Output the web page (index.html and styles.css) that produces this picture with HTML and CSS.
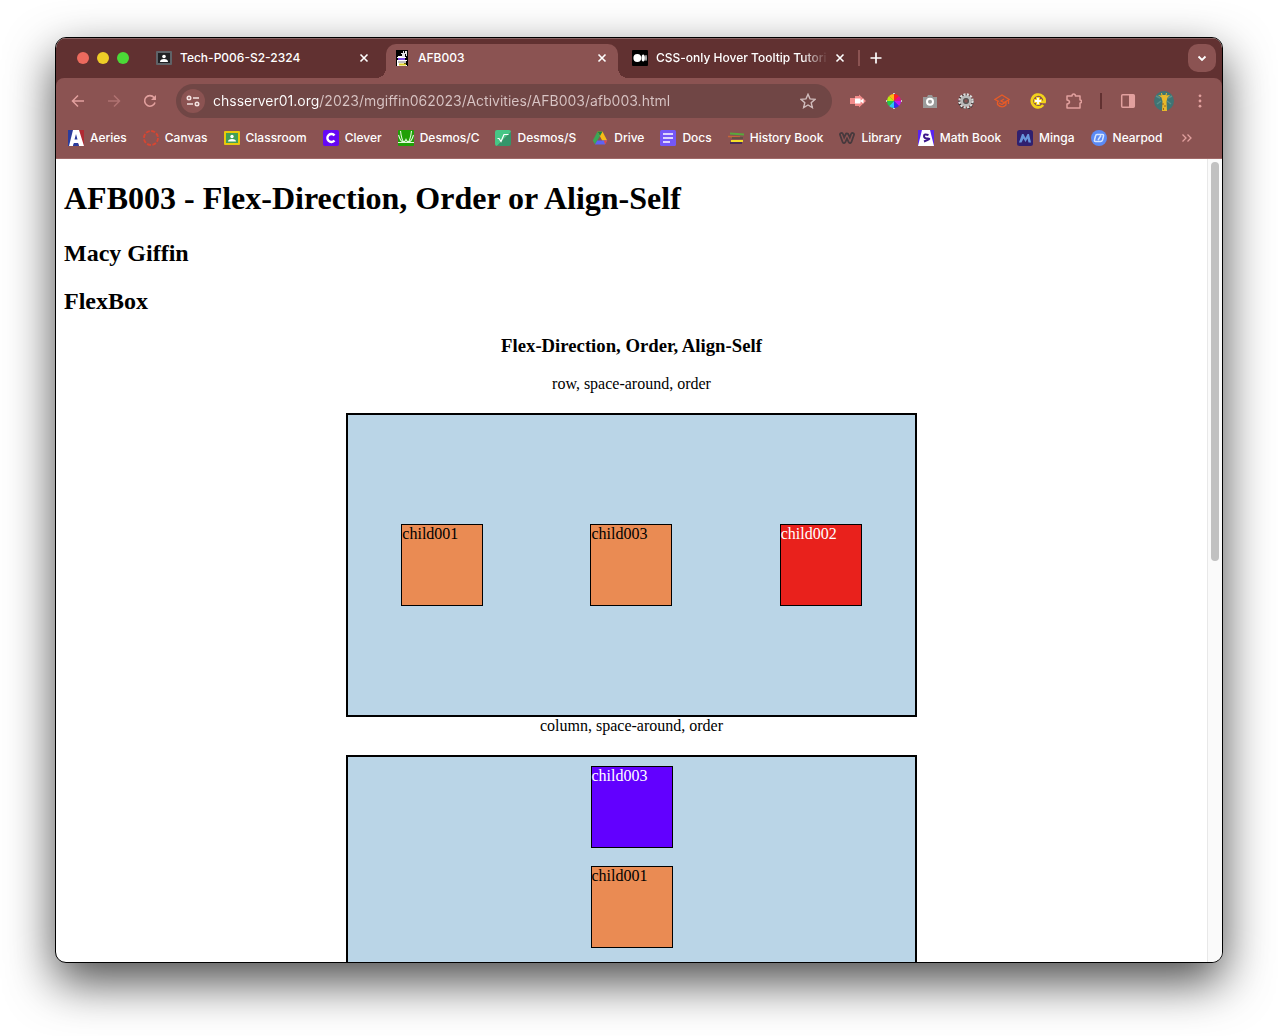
FILE: index.html
```html
<!DOCTYPE html>
<html lang="en">
<head>
<meta charset="utf-8">
<title>AFB003</title>
<link rel="stylesheet" href="styles.css">
</head>
<body>
<div class="window">
  <header class="chrome">
    <div class="tabstrip">
      <div class="lights"><span class="light red"></span><span class="light yellow"></span><span class="light green"></span></div>
      <div class="tabs">
        <div class="tab">
          <svg class="icon" viewBox="0 0 16 16"><rect y="1" width="16" height="14" rx="1" fill="#5f6368"/><rect x="2" y="3" width="12" height="10" fill="#202124"/><circle cx="8" cy="6.5" r="1.8" fill="#fff"/><path d="M4 12q0-3 4-3t4 3z" fill="#fff"/></svg>
          <span class="tab-title">Tech-P006-S2-2324</span>
          <button class="close" aria-label="Close tab"><svg viewBox="0 0 16 16"><path d="M4.5 4.500l7 7m0-7l-7 7" stroke="#fff" stroke-width="1.600"/></svg></button>
        </div>
        <div class="tab active">
          <svg class="icon" viewBox="0 0 16 16"><path d="M2 0h12v16H2z" fill="#000"/><path d="M9 1h1v2h1V1h2v5h-2v1H8V4H7V3h2z" fill="#e4e4e4"/><path d="M4 6h4v1h4v1H3V7h1zM3 10h10v1H3zM3 11h1v2h6v1H6v1h7v1H3z" fill="#fff"/><path d="M4 9h7" stroke="#7c4be0" stroke-width="2"/><path d="M4 12h8" stroke="#fff" stroke-width="1.500"/><path d="M5 14.500h7" stroke="#dcd02a" stroke-width="2"/><path d="M11 4h1v2h-1z" fill="#000"/></svg>
          <span class="tab-title">AFB003</span>
          <button class="close" aria-label="Close tab"><svg viewBox="0 0 16 16"><path d="M4.500 4.500l7 7m0-7l-7 7" stroke="#fff" stroke-width="1.600"/></svg></button>
        </div>
        <div class="tab">
          <svg class="icon" viewBox="0 0 16 16"><rect width="16" height="16" rx="1" fill="#000"/><circle cx="5.300" cy="8" r="3.900" fill="#fff"/><ellipse cx="11.200" cy="8" rx="1.700" ry="3.600" fill="#fff"/><ellipse cx="14" cy="8" rx=".7" ry="3.200" fill="#fff"/></svg>
          <span class="tab-title fade">CSS-only Hover Tooltip Tutori</span>
          <button class="close" aria-label="Close tab"><svg viewBox="0 0 16 16"><path d="M4.500 4.500l7 7m0-7l-7 7" stroke="#fff" stroke-width="1.600"/></svg></button>
        </div>
      </div>
      <span class="tab-divider"></span>
      <button class="new-tab" aria-label="New tab"><svg viewBox="0 0 16 16"><path d="M8 2.500v11M2.500 8h11" stroke="#fff" stroke-width="1.700"/></svg></button>
      <button class="tab-search" aria-label="Search tabs"><svg viewBox="0 0 16 16"><path d="M4.500 6.500L8 10l3.500-3.500" fill="none" stroke="#fff" stroke-width="1.800"/></svg></button>
    </div>
    <div class="toolbar">
      <button class="tool" aria-label="Back"><svg viewBox="0 0 16 16"><path d="M14 8H3M8 2.500L2.500 8 8 13.500" fill="none" stroke="#e2a09e" stroke-width="1.500"/></svg></button>
      <button class="tool" aria-label="Forward"><svg viewBox="0 0 16 16"><path d="M2 8h11M8 2.500L13.500 8 8 13.500" fill="none" stroke="#b07372" stroke-width="1.500"/></svg></button>
      <button class="tool" aria-label="Reload"><svg viewBox="0 0 16 16"><path d="M13 9.500A5.300 5.300 0 1 1 12 4.500L13.500 6" fill="none" stroke="#e2a09e" stroke-width="1.600"/><path d="M14 2v5H9z" fill="#e2a09e"/></svg></button>
      <div class="omnibox">
        <button class="site-info" aria-label="Site information"><svg viewBox="0 0 16 16" fill="none" stroke="#f4e2e1" stroke-width="1.600"><circle cx="4" cy="5" r="1.700"/><path d="M8 5h6M2 11h6"/><circle cx="12" cy="11" r="1.700"/></svg></button>
        <input class="address" type="text" aria-label="Address" value="chsserver01.org/2023/mgiffin062023/Activities/AFB003/afb003.html">
        <button class="star" aria-label="Bookmark this page"><svg viewBox="0 0 16 16"><path d="M8 1.300l2 4.600 5 .45-3.800 3.300 1.150 4.950L8 12l-4.350 2.600L4.800 9.650 1 6.350l5-.45z" fill="none" stroke="#d0bcbc" stroke-width="1.400"/></svg></button>
      </div>
      <div class="extensions">
        <button class="tool" aria-label="Screen recorder"><svg viewBox="0 0 16 16"><path d="M0 5h5V3h4V1.500L16 8l-7 6.500V13H5v-2H0z" fill="#f28b8a"/><path d="M5 5.500h5.500v5H5zM10 8l3.500-2.500v5z" fill="#fff"/></svg></button>
        <button class="tool" aria-label="Color picker"><svg viewBox="0 0 16 16"><path d="M8 8L8 1A7 7 0 0 1 13 3z" fill="#f22"/><path d="M8 8l5-5a7 7 0 0 1 2 5z" fill="#e0108c"/><path d="M8 8h7a7 7 0 0 1-2 5z" fill="#c21af0"/><path d="M8 8l5 5a7 7 0 0 1-5 2z" fill="#352bed"/><path d="M8 8v7a7 7 0 0 1-5-2z" fill="#29c9ef"/><path d="M8 8l-5 5a7 7 0 0 1-2-5z" fill="#22c94b"/><path d="M8 8H1a7 7 0 0 1 2-5z" fill="#b8ee11"/><path d="M8 8L3 3a7 7 0 0 1 5-2z" fill="#ffba15"/><path d="M7 .5h2M7 15.500h2M.5 7v2M15.500 7v2" stroke="#ccc"/></svg></button>
        <button class="tool" aria-label="Screenshot"><svg viewBox="0 0 16 16"><path d="M1 4h4l1-2h4l1 2h4v11H1z" fill="#9a9a9a"/><circle cx="8" cy="8.700" r="3" fill="#9a9a9a" stroke="#fff" stroke-width="2"/></svg></button>
        <button class="tool" aria-label="Settings extension"><svg viewBox="0 0 16 16"><circle cx="8" cy="8.700" r="6.600" fill="none" stroke="#2b2b2b" stroke-width="2.600" stroke-dasharray="2.200 1.250"/><circle cx="8" cy="8" r="6.500" fill="none" stroke="#ddd" stroke-width="2.400" stroke-dasharray="2.100 1.300"/><circle cx="8" cy="8" r="4.200" fill="none" stroke="#b9b9b9" stroke-width="3"/><circle cx="8" cy="8" r="3" fill="#555"/><circle cx="8" cy="8" r="1.700" fill="#8b5352"/></svg></button>
        <button class="tool" aria-label="Scholar"><svg viewBox="0 0 16 16" fill="none" stroke="#e85b26" stroke-width="1.300"><path d="M5 8.500L.8 6.500 8 2l7.200 4.500L10 9.500 7 8l3-2M14.500 7v4M3.500 8.500v3Q8 16 12 12V9L8 11.500 5 10"/></svg></button>
        <button class="tool" aria-label="Edpuzzle"><svg viewBox="0 0 16 16"><path d="M13.200 12A6.400 6.400 0 1 1 14.600 8.800H12" fill="none" stroke="#f2d21b" stroke-width="2.700"/><path d="M8 4v8M4 8h8" stroke="#f2d21b" stroke-width="4"/><path d="M8 4.800v6.400M4.800 8h6.400" stroke="#fff" stroke-width="1.800"/></svg></button>
        <button class="tool" aria-label="Extensions"><svg viewBox="0 0 16 16"><path d="M1 3h5q0-2 1.700-2T9.400 3H14v4q1.500 0 1.500 1.500T14 10v5H1v-4q2.500-.3 2.500-2T1 7z" fill="none" stroke="#e2a09e" stroke-width="1.500" stroke-linejoin="round"/></svg></button>
        <span class="tool-divider"></span>
        <button class="tool" aria-label="Side panel"><svg viewBox="0 0 16 16"><rect x="1.700" y="1.700" width="12.600" height="12.600" rx="1" fill="none" stroke="#e2a09e" stroke-width="1.500"/><path d="M9 2h5v12H9z" fill="#e2a09e"/></svg></button>
        <button class="tool" aria-label="Profile"><svg class="avatar" viewBox="0 0 20 20"><circle cx="10" cy="10" r="10" fill="#3f7474"/><path d="M2 5l4 2M18 5l-4 2M3 13l4-3M17 13l-4-3" stroke="#5b8f8a" stroke-width="1.500"/><path d="M7 2h1l.5 2h3L12 2h1l-.5 2.500L16 4l-2.500 2.500-1 4L13 20H8l.5-9.500-1-4L4 4l3.500.5z" fill="#e9b92b"/><path d="M9 12v2m2 0v2M9.500 17v2" stroke="#a4651d"/></svg></button>
        <button class="tool" aria-label="Menu"><svg viewBox="0 0 16 16" fill="#e2a09e"><circle cx="8" cy="2.800" r="1.400"/><circle cx="8" cy="8" r="1.400"/><circle cx="8" cy="13.200" r="1.400"/></svg></button>
      </div>
    </div>
    <nav class="bookmarks" aria-label="Bookmarks">
      <a href="#"><svg class="icon" viewBox="0 0 16 16"><path d="M0 0h8v16H0z" fill="#2b3c9c"/><path d="M8 0h8v16H8z" fill="#b02a33"/><path d="M5 0h6l5 16h-5l-1-3H6l-1 3H1z" fill="#fff"/><path d="M8 4l1.500 5.500h-3zM6 13h4l1 3H5z" fill="#2b3c9c"/></svg>Aeries</a>
      <a href="#"><svg class="icon" viewBox="0 0 16 16"><circle cx="8" cy="8" r="7" fill="none" stroke="#d64632" stroke-width="1.900" stroke-dasharray="4 1.500"/></svg>Canvas</a>
      <a href="#"><svg class="icon" viewBox="0 0 16 16"><rect y="1" width="16" height="14" rx="1" fill="#e8ca0b"/><rect x="2" y="3" width="12" height="10" fill="#419f57"/><circle cx="8" cy="6.500" r="1.700" fill="#fff"/><path d="M4 11.500q0-2.500 4-2.500t4 2.500z" fill="#fff"/></svg>Classroom</a>
      <a href="#"><svg class="icon" viewBox="0 0 16 16"><rect width="16" height="16" rx="2" fill="#6507f5"/><path d="M11.500 10.500A4 4 0 1 1 11.500 5.500" fill="none" stroke="#fff" stroke-width="2.400"/></svg>Clever</a>
      <a href="#"><svg class="icon" viewBox="0 0 16 16"><rect width="16" height="16" rx="1" fill="#1fa006"/><path d="M.5 5q2 7 5 7 1.500 0 2.500-2.500Q9 12 10.500 12q3 0 5-7M2.500 1q1 8 3 11M13.500 1q-1 8-3 11M0 12.500h16" fill="none" stroke="#e0fad9" stroke-width="1.100"/></svg>Desmos/C</a>
      <a href="#"><svg class="icon" viewBox="0 0 16 16"><path d="M2 0h12a2 2 0 0 1 2 2L2 16a2 2 0 0 1-2-2V2a2 2 0 0 1 2-2z" fill="#46c685"/><path d="M16 2v12a2 2 0 0 1-2 2H2z" fill="#33966a"/><path d="M2.500 8.500h1.500l2 3L9 4.500h4.500" fill="none" stroke="#fff" stroke-width="1.200"/></svg>Desmos/S</a>
      <a href="#"><svg class="icon" viewBox="0 0 16 16"><path d="M5.500 1.500L8 6 3 14.500.8 10.500z" fill="#3aa757"/><path d="M5.500 1.500h5l4.700 9h-5z" fill="#f6bd16"/><path d="M5.500 1.500h5L8 6z" fill="#1c8441"/><path d="M3 14.500L5.200 10.500h10L13 14.500z" fill="#5d63f4"/><path d="M12 10.500h3.200L13 14.500z" fill="#e44b3d"/></svg>Drive</a>
      <a href="#"><svg class="icon" viewBox="0 0 16 16"><rect width="16" height="16" rx="1.500" fill="#7457f7"/><path d="M3 4h10M3 8h10M3 12h7" stroke="#fff" stroke-width="1.700"/></svg>Docs</a>
      <a href="#"><svg class="icon" viewBox="0 0 16 16"><path d="M2 3.500l14 1" stroke="#58a83c" stroke-width="2"/><path d="M0 6.500l12 .5" stroke="#c76638" stroke-width="1.300"/><path d="M4 8h11" stroke="#554d42" stroke-width="1.700"/><path d="M3 11h12" stroke="#f5df29" stroke-width="2"/><path d="M2 13h12" stroke="#35215c" stroke-width="1.500"/></svg>History Book</a>
      <a href="#"><svg class="icon" viewBox="0 0 16 16" fill="none" stroke="#47393d" stroke-linejoin="round" stroke-linecap="round"><path d="M2.500 4.500L5 11.500 8 5l3 6.500 2.500-7" stroke-width="4.800"/><path d="M2.500 4.500L5 11.500 8 5l3 6.500 2.500-7" stroke="#8b5352" stroke-width="1.300"/></svg>Library</a>
      <a href="#"><svg class="icon" viewBox="0 0 16 16"><path d="M0 0h16v16H0z" fill="#5a24ef"/><path d="M4 0h8l4 16H0z" fill="#fff"/><path d="M10.500 5Q6 3.500 6 6t4 2.500T6 11.500" fill="none" stroke="#3d168a" stroke-width="2"/></svg>Math Book</a>
      <a href="#"><svg class="icon" viewBox="0 0 16 16"><rect width="16" height="16" rx="2.500" fill="#30206f"/><path d="M2 12.500L5 4h1.500L8.500 8l2-4H12l2 8.500h-2.500l-1-4-2 3.500-2-3.500-2 4z" fill="#6796dc"/></svg>Minga</a>
      <a href="#"><svg class="icon" viewBox="0 0 16 16"><circle cx="8" cy="8" r="8" fill="#5b8af5"/><path d="M6 4.500h5.500q1.500 0 1 1.500l-1 4q-.5 1.500-2 1.500H4.500q-1.500 0-1-1.500l1-4q.3-1.500 1.500-1.500zM7 10l3-4.500" fill="none" stroke="#d6e6ff" stroke-width="1.500"/></svg>Nearpod</a>
      <button class="overflow" aria-label="More bookmarks"><svg viewBox="0 0 16 16"><path d="M3.500 4.500L7 8l-3.500 3.500M8.500 4.500L12 8l-3.500 3.500" fill="none" stroke="#e2a09e" stroke-width="1.300"/></svg></button>
    </nav>
  </header>
  <div class="viewport">
    <main class="page">
      <h1>AFB003 - Flex-Direction, Order or Align-Self</h1>
      <h2>Macy Giffin</h2>
      <h2>FlexBox</h2>
      <section class="demo">
        <h3>Flex-Direction, Order, Align-Self</h3>
        <p>row, space-around, order</p>
        <div class="parent row">
          <div class="child">child001</div>
          <div class="child last red-box">child002</div>
          <div class="child">child003</div>
        </div>
        <p>column, space-around, order</p>
        <div class="parent column">
          <div class="child">child001</div>
          <div class="child"></div>
          <div class="child first purple-box">child003</div>
        </div>
      </section>
    </main>
    <div class="scrollbar"><div class="thumb"></div></div>
  </div>
</div>
</body>
</html>
```
FILE: styles.css
```css
* { box-sizing: border-box; }

body {
  margin: 0;
  height: 100vh;
  padding: 37px 55px 73px;
  background: #fff;
  font-family: "Liberation Serif", "Times New Roman", serif;
  font-size: 16px;
}

button {
  display: flex;
  align-items: center;
  justify-content: center;
  padding: 0;
  border: 0;
  background: none;
}

button svg { width: 16px; height: 16px; }

.window {
  display: flex;
  flex-direction: column;
  height: 100%;
  border: 1px solid #000;
  border-radius: 11px;
  overflow: hidden;
  background: #fff;
  box-shadow: 0 19px 48px rgba(0, 0, 0, .7);
}

.chrome {
  background: #613131;
  color: #fff;
  font-family: Inter, "Liberation Sans", sans-serif;
  font-size: 12px;
  font-weight: 450;
}

/* Tab strip */
.tabstrip {
  display: flex;
  align-items: center;
  height: 40px;
  padding: 0 6px 0 21px;
  box-shadow: inset 0 1px #8a6363;
}

.lights { display: flex; gap: 8px; width: 71px; }
.light { width: 12px; height: 12px; border-radius: 50%; }
.red { background: #ed6a5e; }
.yellow { background: #eece27; }
.green { background: #4bd937; }

.tabs { display: flex; gap: 6px; align-self: flex-end; }

.tab {
  position: relative;
  display: flex;
  align-items: center;
  width: 232px;
  height: 34px;
  padding: 0 8px 6px;
}

.tab.active { background: #8b5352; border-radius: 10px 10px 0 0; }

.tab.active::before,
.tab.active::after {
  content: "";
  position: absolute;
  bottom: 0;
  width: 10px;
  height: 10px;
}

.tab.active::before { right: 100%; background: radial-gradient(circle at 0 0, transparent 10px, #8b5352 10px); }
.tab.active::after { left: 100%; background: radial-gradient(circle at 100% 0, transparent 10px, #8b5352 10px); }

.icon { flex: none; width: 16px; height: 16px; }

.tab-title {
  flex: 1;
  margin: 0 4px 0 8px;
  overflow: hidden;
  white-space: nowrap;
  line-height: 16px;
}

.fade {
  -webkit-mask-image: linear-gradient(to right, #000 85%, transparent);
  mask-image: linear-gradient(to right, #000 85%, transparent);
}

.close { width: 16px; height: 16px; }
.tab-divider { width: 2px; height: 16px; margin-left: 2px; background: #8b5352; }
.new-tab { width: 32px; height: 28px; }

.tab-search {
  width: 28px;
  height: 28px;
  margin-left: auto;
  border-radius: 10px;
  background: #8b5352;
}

/* Toolbar */
.toolbar {
  display: flex;
  align-items: center;
  height: 46px;
  padding: 0 4px;
  border-radius: 8px 8px 0 0;
  background: #8b5352;
}

.tool { width: 36px; height: 34px; }
.tool .avatar { width: 20px; height: 20px; }

.omnibox {
  display: flex;
  flex: 1;
  align-items: center;
  height: 34px;
  margin: 0 8px;
  padding: 0 12px 0 5px;
  border-radius: 17px;
  background: #704645;
}

.site-info { width: 24px; height: 24px; border-radius: 50%; background: #8b5352; }

.address {
  flex: 1;
  margin: 0 8px;
  padding: 0;
  border: 0;
  outline: 0;
  font: inherit;
  font-size: 14px;
  font-weight: 400;
  line-height: 20px;
  color: transparent;
  background: linear-gradient(to right, #fff 107px, #d9c5c5 107px);
  -webkit-background-clip: text;
  background-clip: text;
}

.star { width: 24px; height: 24px; }
.extensions { display: flex; align-items: center; }
.tool-divider { width: 2px; height: 16px; margin: 0 8px; background: #613131; }

/* Bookmarks */
.bookmarks {
  display: flex;
  align-items: center;
  gap: 16px;
  height: 35px;
  padding: 0 28px 6px 12px;
  border-bottom: 1px solid #a06a69;
  background: #8b5352;
}

.bookmarks a {
  display: flex;
  align-items: center;
  gap: 6px;
  color: #fff;
  line-height: 16px;
  text-decoration: none;
  white-space: nowrap;
}

.overflow { margin-left: auto; }

/* Web page */
.viewport { display: flex; flex: 1; min-height: 0; overflow: hidden; }

.page { flex: 1; padding: 0 8px; overflow: hidden; }

h1 { margin: 21px 0 22px; font-size: 32px; line-height: 37px; }
h2 { margin: 20px 0; font-size: 24px; line-height: 28px; }
h3 { margin: 20px 0 18px; line-height: 22px; }
p { margin: 0 0 20px; line-height: 18px; }

.demo { display: flex; flex-direction: column; align-items: center; }
.demo h3 { margin-top: 0; }

.parent {
  display: flex;
  flex: none;
  align-items: center;
  justify-content: space-around;
  box-sizing: content-box;
  width: 50%;
  height: 300px;
  border: 2px solid #000;
  background: #bad5e7;
}

.column { flex-direction: column; }

.child {
  width: 82px;
  height: 82px;
  border: 1px solid #000;
  background: #ea8b53;
  line-height: 18px;
}

.first { order: -1; }
.last { order: 1; }
.red-box { background: #e9211c; color: #fff; }
.purple-box { background: #6200ff; color: #fff; }

.scrollbar {
  width: 15px;
  padding: 3px;
  border-left: 1px solid #e8e8e8;
  background: #fafafa;
}

.thumb { width: 8px; height: 50%; border-radius: 4px; background: #c1c1c1; }
```
